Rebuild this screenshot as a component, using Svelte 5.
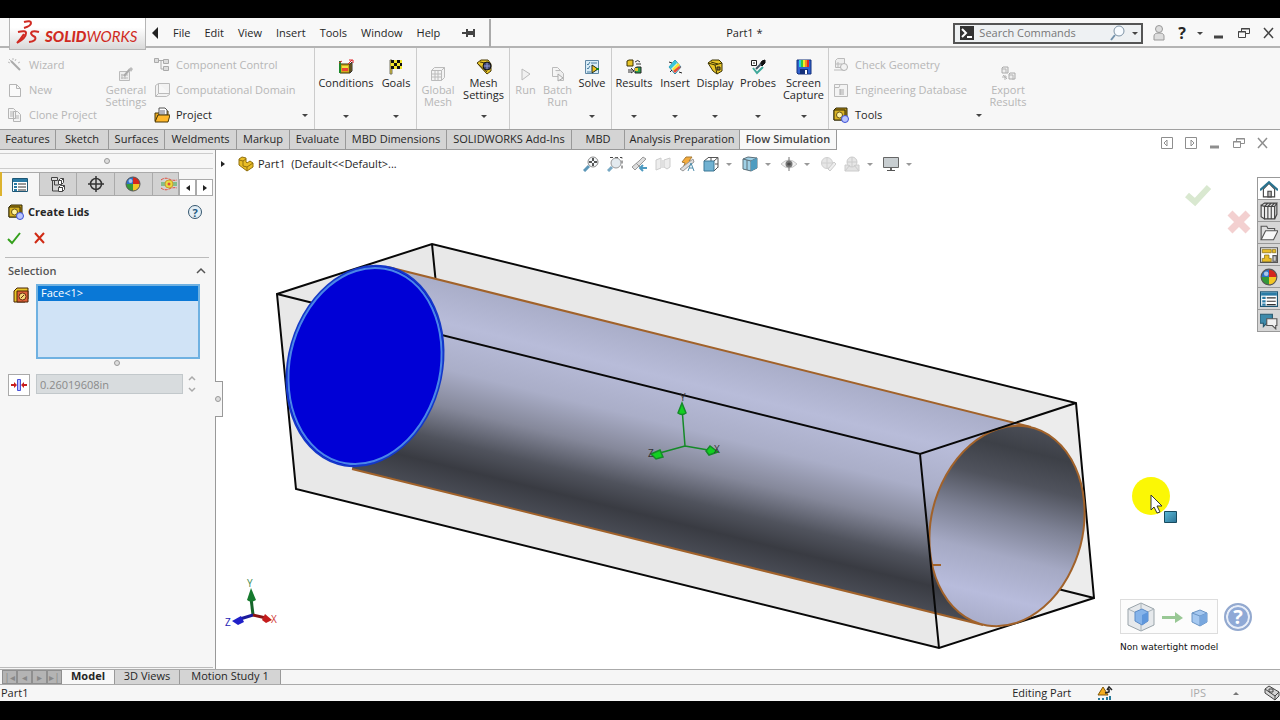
<script lang="ts">
    type Command = { label: string, icon: string, width: number, disabled?: boolean, menu?: boolean }

    const menus = ['File', 'Edit', 'View', 'Insert', 'Tools', 'Window', 'Help']

    const setup = [
        {label: 'Wizard', icon: 'wizard'},
        {label: 'New', icon: 'page'},
        {label: 'Clone Project', icon: 'clone'},
    ]

    const general: Command[] = [{label: 'General Settings', icon: 'general', width: 54, disabled: true}]

    const groups: Command[][] = [
        [
            {label: 'Conditions', icon: 'conditions', width: 62, menu: true},
            {label: 'Goals', icon: 'goals', width: 38, menu: true},
        ],
        [
            {label: 'Global Mesh', icon: 'globalMesh', width: 42, disabled: true},
            {label: 'Mesh Settings', icon: 'mesh', width: 49, menu: true},
        ],
        [
            {label: 'Run', icon: 'run', width: 31, disabled: true},
            {label: 'Batch Run', icon: 'batch', width: 33, disabled: true},
            {label: 'Solve', icon: 'solve', width: 36, menu: true},
        ],
        [
            {label: 'Results', icon: 'results', width: 44, menu: true},
            {label: 'Insert', icon: 'insert', width: 38, menu: true},
            {label: 'Display', icon: 'display', width: 42, menu: true},
            {label: 'Probes', icon: 'probes', width: 44, menu: true},
            {label: 'Screen Capture', icon: 'capture', width: 47, menu: true},
        ],
    ]

    const tabs = [
        {label: 'Features', width: 56},
        {label: 'Sketch', width: 53},
        {label: 'Surfaces', width: 56},
        {label: 'Weldments', width: 72},
        {label: 'Markup', width: 53},
        {label: 'Evaluate', width: 56},
        {label: 'MBD Dimensions', width: 101},
        {label: 'SOLIDWORKS Add-Ins', width: 125},
        {label: 'MBD', width: 53},
        {label: 'Analysis Preparation', width: 115},
        {label: 'Flow Simulation', width: 97},
    ]

    const panelTabs = ['properties', 'config', 'target', 'ball', 'flow']

    const hud = [
        {icon: 'zoomFit', label: 'Zoom to Fit'},
        {icon: 'zoomArea', label: 'Zoom to Area'},
        {icon: 'previous', label: 'Previous View'},
        {icon: 'section', label: 'Section View'},
        {icon: 'annotation', label: 'Annotation Views'},
        {icon: 'orient', label: 'View Orientation', menu: true},
        {icon: 'style', label: 'Display Style', menu: true},
        {icon: 'eye', label: 'Hide/Show Items', menu: true},
        {icon: 'appearance', label: 'Edit Appearance'},
        {icon: 'sceneBall', label: 'Apply Scene', menu: true},
        {icon: 'monitor', label: 'View Settings', menu: true},
    ]

    const taskPane = ['home', 'library', 'folder', 'palette', 'ball', 'properties', 'forum']
    const sheets = [{label: 'Model', width: 53}, {label: '3D Views', width: 65}, {label: 'Motion Study 1', width: 101}]

    let activeTab = $state('Flow Simulation')
    let activeSheet = $state('Model')
    let activePanel = $state('properties')
    let search = $state('')
    let thickness = $state('0.26019608in')

    // 16x16 artwork
    const icons: Record<string, string> = {
        wizard: '<path d="M4 4l9 9" stroke="#aaa" stroke-width="2"/><path d="M1 5l2 1M6 1v2M2 2l2 2M9 2l-1 2M11 6l2-1" stroke="#bbb"/>',
        page: '<path d="M2.500 2.500h7l4 4v8h-11zM9.500 2.500v4h4" fill="#fafafa" stroke="#b5b5b5"/>',
        clone: '<path d="M1.500 1.500h5l2 2v8h-7zM6.500 4.500h4l3 3v7h-7z" fill="#f4f4f4" stroke="#b5b5b5"/><path d="M3 5h4M3 7h3M3 9h3M8 9h4M8 11h4" stroke="#b5b5b5"/>',
        general: '<path d="M1.500 5.500h10v9h-10z" fill="#eee" stroke="#bbb"/><path d="M4 8v5M7 8v5M3 9h7M3 12h7" stroke="#bbb"/><path d="M6 10l6-7" stroke="#aaa" stroke-width="2"/><path d="M11 3l2-2 2 2-2 3z" fill="#bbb"/>',
        component: '<path d="M.5 1.500h4v4h-4zM9.500 2.500h5v4h-5zM9.500 9.500h5v4h-5z" fill="#ddd" stroke="#aaa"/><path d="M5 3.500h5M7 4v8h2" fill="none" stroke="#aaa"/>',
        domain: '<path d="M1.500 3.500l3-2h11v11l-3 2h-11zM4.500 1.500v10h11M4.500 11.500l-3 3" fill="#f2f2f2" stroke="#bbb"/>',
        project: '<path d="M1 6h4l1-2h8v4H4l-2 6H1z" fill="#e9a820" stroke="#4a3908"/><path d="M5 1h6l2 2v5H5z" fill="#fff" stroke="#555"/><path d="M6 4h5M6 6h5" stroke="#667"/><path d="M4 8h12l-2 7H1z" fill="#ffb82c" stroke="#4a3908"/>',
        conditions: '<path d="M2 5h10v9H2z" fill="#cfa91c" stroke="#3a3205"/><path d="M12 5l2-2v9l-2 2z" fill="#8a6d10" stroke="#333"/><path d="M4 7h6v5H4z" fill="#f0e33c"/><path d="M4 9h6v3H4z" fill="#e43"/><path d="M2 2v12" stroke="#1b8a2a" stroke-width="2"/><path d="M1 4l3-2M10 5l4-4M11 1h4v3" stroke="#e2262b" fill="none"/>',
        goals: '<path d="M2 1h2v14H2z" fill="#e8c81c" stroke="#776"/><path d="M3 1h11v9H3z" fill="#f1e62c"/><path d="M3 1h3v3H3zM9 1h3v3H9zM6 4h3v3H6zM12 4h2v3h-2zM3 7h3v3H3zM9 7h3v3H9z" fill="#111"/>',
        globalMesh: '<path d="M1.500 4.500l3-3h10v10l-3 3h-10zM1.500 4.500h10v10M11.500 4.500l3-3M5 4v10M8 4v10M2 8h10M2 11h10" fill="#f3f3f3" stroke="#bbb"/>',
        mesh: '<path d="M1 4l4-3h7l3 4v7l-4 3z" fill="#e8c528" stroke="#4a3a05"/><path d="M2 5l9 8M4 3l5 1" stroke="#4a3a05"/><circle cx="11" cy="7" r="4" fill="#44486c" stroke="#111"/><path d="M8 7h6M11 4v6" stroke="#8e98df"/>',
        run: '<path d="M4 3l8 5-8 6z" fill="#f1f1f1" stroke="#bbb"/>',
        batch: '<path d="M2.500 1.500h5l3 3v6h-8z" fill="#f5f5f5" stroke="#bbb"/><path d="M5.500 4.500h5l3 3v7h-4" fill="#eee" stroke="#bbb"/><path d="M8 8l5 4-5 3z" fill="#f5f5f5" stroke="#aaa"/>',
        solve: '<path d="M1.500 1.500h13v13h-13z" fill="#d9ecf7" stroke="#5f87a4"/><path d="M3 5l1 1 2-3M3 9l1 1 2-3M3 13h4M7 4h6" stroke="#4a7f9f" fill="none"/><path d="M8 6l6 4-6 4z" fill="#f0c020" stroke="#1a2b1c"/><path d="M12 10h3" stroke="#14801f" stroke-width="2"/>',
        results: '<path d="M1 2l2-1h4v6H1z" fill="#e8c528" stroke="#3a3205"/><path d="M9 9l2-1h4v6H9z" fill="#2ca24e" stroke="#222"/><path d="M9 9h3v3H9z" fill="#e8c528"/><path d="M9 3q3-3 5 0M10 5h5M2 11h5M2 13h4M5 9l3 3-3 2" stroke="#333" fill="none"/>',
        insert: '<path d="M8 1l6 7-6 7-6-7z" fill="#efe" stroke="#28a"/><path d="M2 8l6-7 2 3-6 6z" fill="#36c6d8"/><path d="M5 10l6-6 2 2-6 6z" fill="#f5e339"/><path d="M8 14l6-6-2-1-6 5z" fill="#e84a3c"/><path d="M2 3l3 1M12 13l3 1M3 13l2-2" stroke="#222"/>',
        display: '<path d="M1 4l4-3h7l3 3v8l-5 3-4-3z" fill="#e8c528" stroke="#3a3205"/><path d="M1 4l7 2 7-2M8 6l2 9M4 3l7 2" stroke="#3a3205" fill="none"/><path d="M10 8h3v3h-3z" fill="#9a7b12" stroke="#222"/>',
        probes: '<path d="M1.500 1.500h5v5h-5z" fill="#fff" stroke="#222"/><path d="M3 4h2" stroke="#222"/><path d="M12 2l3-1v3l-3 3-2-2z" fill="#111" stroke="#111"/><path d="M11 5l-5 5" stroke="#456" stroke-width="2"/><path d="M3 9l4 5 6-6" stroke="#3fa89a" stroke-width="2" fill="none"/>',
        capture: '<path d="M1 1h14v14H2l-1-1z" fill="#2f60cf" stroke="#14307a"/><path d="M3 1h2v7H3z" fill="#2bd0e0"/><path d="M5 1h2v7H5z" fill="#36c83c"/><path d="M7 1h2v7H7z" fill="#f1ea2c"/><path d="M9 1h2v7H9z" fill="#f09021"/><path d="M11 1h2v7h-2z" fill="#e2262b"/><path d="M4 10h8v5H4z" fill="#14307a"/><path d="M9 11h2v4H9z" fill="#fff"/>',
        check: '<path d="M2.500 3.500l2-2h7v9h-9z" fill="#eee" stroke="#bbb"/><circle cx="11" cy="10" r="3.500" fill="#f2f2f2" stroke="#b2b2b2"/><path d="M1 13h9M5 5v5M3 7h6" stroke="#bbb"/>',
        database: '<path d="M1.500 2.500h13v12h-13zM2 5.500h4l1-3" fill="#f3f3f3" stroke="#bbb"/><path d="M7 8h4M7 10h4M7 12h4M7 7v6" stroke="#aaa"/>',
        lids: '<path d="M1 3l2-2h11v10l-2 2H1z" fill="#b58d12" stroke="#332a05"/><path d="M1 3h11v10H1z" fill="#d9b222" stroke="#332a05"/><circle cx="6.500" cy="8" r="3" fill="#fff3a0" stroke="#6b5410"/><circle cx="12" cy="12" r="3.500" fill="#b9c4ff" stroke="#3c50d4"/>',
        exporting: '<path d="M2 2l1-1h5v6H2zM9 8l1-1h5v6H9z" fill="#eee" stroke="#aaa"/><path d="M2 3h4v4M9 9h4v5M3 9l4 4M2 11h5M5 9v5" stroke="#b5b5b5" fill="none"/>',
        properties: '<path d="M.5 1.500h15v13H.5z" fill="#fff" stroke="#1c5674"/><path d="M1 2h14v3H1z" fill="#2a7ba5"/><path d="M2 6h3v2H2zM2 9h3v2H2zM2 12h3v2H2z" fill="#2a7ba5"/><path d="M6 7h8M6 10h8M6 13h8" stroke="#333"/>',
        config: '<path d="M1.500 1.500h6v3h-6z" fill="#ddd" stroke="#444"/><path d="M2.500 5v10h6M4.500 5v4h4" fill="none" stroke="#444"/><path d="M8.500 4.500l2-2h3v4l-2 2h-3zM8.500 11.500l2-2h4v4l-2 2h-4z" fill="#fff" stroke="#444"/><path d="M8.500 4.500h3v4M11.500 4.500l2-2M8.500 11.500h4v4M12.500 11.500l2-2" stroke="#444"/>',
        target: '<circle cx="8" cy="8" r="5.500" fill="none" stroke="#333" stroke-width="1.500"/><path d="M8 0v16M0 8h16" stroke="#333" stroke-width="1.500"/>',
        ball: '<path d="M8 8V1a7 7 0 0 0-7 7z" fill="#2d72c8"/><path d="M8 8h7a7 7 0 0 0-7-7z" fill="#d5271d"/><path d="M8 8v7a7 7 0 0 0 7-7z" fill="#f3c624"/><path d="M8 8H1a7 7 0 0 0 7 7z" fill="#35993a"/><circle cx="8" cy="8" r="7" fill="none" stroke="#555"/><circle cx="5.500" cy="5" r="2" fill="#fff" opacity=".6"/>',
        flow: '<path d="M0 4q4-3 8-1t8 1M0 12q4 3 8 1t8-1" stroke="#e24b3a" fill="none" stroke-dasharray="3 1"/><path d="M0 7h5M11 7h5M0 9h5M11 9h5" stroke="#39a844"/><circle cx="8" cy="8" r="4" fill="#e7dd3c" stroke="#c93"/><circle cx="8" cy="8" r="1.500" fill="#e24b3a"/>',
        face: '<path d="M1 4l3-3h11v11l-3 3H1z" fill="#e8c528" stroke="#4a2505"/><path d="M4 4h11v11H4z" fill="#e0603a" stroke="#4a2505"/><circle cx="9.500" cy="9.500" r="3.500" fill="#f4d77a" stroke="#6b2a10"/><path d="M8 11l3-3" stroke="#6b2a10"/>',
        thickness: '<path d="M6.500 2.500h3v11h-3z" fill="#b9bfff" stroke="#4850d8"/><path d="M0 8h3M13 8h3" stroke="#c81e1e" stroke-width="2"/><path d="M3 5l3 3-3 3zM13 5l-3 3 3 3z" fill="#c81e1e"/>',
        part: '<path d="M1 6V3l3-2 4 1v4l1 1 3-2 3 2v4l-6 4-8-6z" fill="#e9bd26" stroke="#91700f"/><path d="M1 4l4 1v5l4 1 6-4M5 5l3-2M9 11v4" fill="none" stroke="#91700f"/>',
        zoomFit: '<circle cx="10" cy="6" r="5" fill="#f5f8fa" stroke="#8a8a8a"/><path d="M10 2v3M10 7v3M6 6h3M11 6h3" stroke="#222" stroke-width="1.500"/><path d="M6 10l-5 5" stroke="#5c97b8" stroke-width="3"/>',
        zoomArea: '<path d="M3 1.500h12v12" fill="none" stroke="#444" stroke-dasharray="3 2"/><circle cx="9" cy="7" r="5" fill="#e3eaef" stroke="#999"/><path d="M5 11l-4 4" stroke="#79a9c4" stroke-width="3"/>',
        previous: '<path d="M1 11l7-6 4-4 3 2-5 5-6 6z" fill="#ddd" stroke="#999"/><path d="M5 7l4 4" stroke="#999"/><path d="M9 12h7M12 9l-3 3 3 3" stroke="#4d9ac0" stroke-width="2" fill="none"/>',
        section: '<path d="M1 4l5-2v10l-5 2zM9 4l6-2v9l-3 2-3-2z" fill="#ededed" stroke="#ccc"/><path d="M6 4h3v8H6z" fill="#e0e0e0"/>',
        annotation: '<path d="M3 6l4-5h6l-3 4h3l-9 7 2-5z" fill="#f4ab3c" stroke="#a57a36"/><path d="M1 13l9-7 4-3 1 3-5 4-6 5z" fill="#ddd" stroke="#999"/><path d="M9 15l3-8 3 8M10 12h4" stroke="#4d8cab" fill="none"/>',
        orient: '<path d="M5 1.500h10v10M5.500 1.500L1 5M15 1.500L11 5M15 11l-4 4M8 1v5M12 8h3" fill="none" stroke="#555"/><path d="M1 5h10v10H1z" fill="#71b2d2" stroke="#3c7896"/>',
        style: '<path d="M1 3l5-2 9 1v10l-6 3-8-2z" fill="#9fd0e6" stroke="#5a6e78"/><path d="M1 3l8 2v10M9 5l6-3M5 4v10" fill="none" stroke="#5a6e78"/><path d="M9 5l6-3v10l-6 3z" fill="#4f9cc0"/>',
        eye: '<path d="M0 8q8-8 16 0-8 8-16 0z" fill="#f1f1f1" stroke="#c5c5c5"/><circle cx="8" cy="8" r="3.500" fill="#777"/><circle cx="8" cy="8" r="1.500" fill="#222"/><path d="M8 1v14" stroke="#777"/>',
        appearance: '<circle cx="7" cy="7" r="5.500" fill="#e6e6e6" stroke="#d0d0d0"/><path d="M7 1v12M2 7h11" stroke="#d0d0d0"/><path d="M8 13l6-7 2 2-6 7z" fill="#eee" stroke="#ccc"/>',
        sceneBall: '<path d="M1 9h14v6H1z" fill="#e2e2e2" stroke="#ccc"/><circle cx="8" cy="6" r="5" fill="#e6e6e6" stroke="#ccc"/><path d="M8 1v10M3 6h10M1 15l5-6M15 15l-5-6" stroke="#ccc"/>',
        monitor: '<path d="M.5 1.500h15v10H.5z" fill="#c8ced1" stroke="#666"/><path d="M7 12h2v2H7z" fill="#666"/><path d="M4 14.500h8" stroke="#555"/>',
        home: '<path d="M3 8v7h10V8L8 3z" fill="#fff" stroke="#444"/><path d="M0 9l8-7 8 7" fill="none" stroke="#2a7490" stroke-width="2"/><path d="M7 10h3v5H7z" fill="#bbb" stroke="#444"/>',
        library: '<path d="M1 3l3 1v11l-3-2zM4 4h3v11H4zM7 4h3v11H7zM10 4h3v11h-3z" fill="#eee" stroke="#444"/><path d="M1 3l3-2h11l-2 3M15 1v10l-2 4M10 4l3-3M7 4l3-3M4 4l3-3" fill="none" stroke="#444"/>',
        folder: '<path d="M1 14V2h5l1 2h6v3" fill="#ddd" stroke="#555"/><path d="M1 14L5 6h11l-4 8z" fill="#f8f8f8" stroke="#555"/>',
        palette: '<path d="M.5 1.500h15v13H.5z" fill="#fff" stroke="#555"/><path d="M2 3h8v3H2zM2 11h2V8h4v3h2v3H2zM11 3h3v3h-3z" fill="#e9bd26" stroke="#7b620e" stroke-width=".6"/><path d="M11.500 8.500h3v5h-3z" fill="#ccc" stroke="#555"/>',
        forum: '<path d="M0 2h11v8H6l-3 3v-3H0z" fill="#3d8aab" stroke="#285a70"/><path d="M6 6h9v6h-1v3l-3-3H6z" fill="#f0f0f0" stroke="#555"/>',
        warning: '<path d="M1 10l5-8 5 8z" fill="#f5ad1e" stroke="#80570a"/><path d="M8 8l4-1V4M10 5l2-3 3 3" stroke="#222" stroke-width="1.500" fill="none"/><path d="M1 13h2v2H1zM5 13h2v2H5zM9 12h2v3H9zM12 11h2v4h-2z" fill="#25799a"/>',
        tag: '<path d="M1 4l4-3 10 6v4l-4 4L1 8z" fill="#d5d5d5" stroke="#444"/><path d="M1 4l10 7v4M11 11l4-4M5 4h4v3H5z" fill="none" stroke="#444"/>',
    }
</script>

{#snippet icon(name: string)}
    <svg class="icon" viewBox="0 0 16 16" fill="none" aria-hidden="true">{@html icons[name]}</svg>
{/snippet}

{#snippet bigButton(cmd: Command)}
    <button class="big" disabled={cmd.disabled} style:width="{cmd.width}px">
        {@render icon(cmd.icon)}
        <span>{cmd.label}</span>
        {#if cmd.menu}<i class="caret"></i>{/if}
    </button>
{/snippet}

{#snippet windowButtons()}
    <button class="win" aria-label="Minimize"><svg viewBox="0 0 14 14"><path d="M2 11h9" stroke-width="3"/></svg></button>
    <button class="win" aria-label="Restore"><svg viewBox="0 0 14 14"><path d="M4.500 5V2.500h8v5H9M1.500 5.500h7v6h-7zM4 3h9M1 6h8" /></svg></button>
    <button class="win" aria-label="Close"><svg viewBox="0 0 14 14"><path d="M2 2l9 10M11 2l-9 10" stroke-width="1.500"/></svg></button>
{/snippet}

<div class="window">
    <header>
        <div class="logo">
            <svg viewBox="0 0 26 28" aria-hidden="true">
                <path d="M9 2q7-2 7 1 0 3-7 5M3 12q8-2 8 1 0 5-9 10Q5 20 9 14M24 12q-7-2-8 1 0 2 4 4 2 4-6 5" />
            </svg>
            <span><b>SOLID</b>WORKS</span>
        </div>
        <button class="collapse" aria-label="Collapse menu"><i class="left"></i></button>
        <nav>
            {#each menus as menu}
                <button>{menu}</button>
            {/each}
        </nav>
        <svg class="pin" viewBox="0 0 14 10" aria-hidden="true"><path d="M0 5h5M5 1v8M12 1v8M6 4h6M6 6h6" stroke="#444" stroke-width="2"/></svg>
        <h1>Part1 *</h1>
        <div class="search">
            <svg viewBox="0 0 14 14" aria-hidden="true"><path d="M0 0h14v14H0z" fill="#333"/><path d="M2 3l4 4-4 4M7 11h5" stroke="#fff" stroke-width="2" fill="none"/></svg>
            <input aria-label="Search Commands" placeholder="Search Commands" bind:value={search}>
            <svg class="lens" viewBox="0 0 16 16" aria-hidden="true"><circle cx="9" cy="6" r="5" fill="#f7fbff" stroke="#7e93a5"/><path d="M5 10l-4 5" stroke="#7392ac" stroke-width="2"/></svg>
            <i class="caret"></i>
        </div>
        <svg class="user" viewBox="0 0 14 18" aria-hidden="true"><circle cx="7" cy="5" r="3.500"/><path d="M2 16V12q0-3 5-3t5 3v4z"/></svg>
        <button class="help-menu" aria-label="Help">?<i class="caret"></i></button>
        <div class="controls">{@render windowButtons()}</div>
    </header>

    <section class="ribbon">
        <div class="rows setup">
            {#each setup as item}
                <button disabled>{@render icon(item.icon)}{item.label}</button>
            {/each}
        </div>
        {#each general as cmd}{@render bigButton(cmd)}{/each}
        <div class="rows project">
            <button disabled>{@render icon('component')}Component Control</button>
            <button disabled>{@render icon('domain')}Computational Domain</button>
            <button>{@render icon('project')}Project<i class="caret"></i></button>
        </div>
        {#each groups as group}
            <div class="group">
                {#each group as cmd}{@render bigButton(cmd)}{/each}
            </div>
        {/each}
        <div class="rows tools">
            <button disabled>{@render icon('check')}Check Geometry</button>
            <button disabled>{@render icon('database')}Engineering Database</button>
            <button>{@render icon('lids')}Tools<i class="caret"></i></button>
        </div>
        {@render bigButton({label: 'Export Results', icon: 'exporting', width: 48, disabled: true})}
    </section>

    <div class="tabs">
        {#each tabs as tab}
            <button class:active={activeTab === tab.label} style:width="{tab.width}px"
                    onclick={() => activeTab = tab.label}>{tab.label}</button>
        {/each}
        <div class="doc-controls">
            <button class="win" aria-label="Previous pane"><svg viewBox="0 0 14 14"><path d="M1.500 1.500h11v11h-11zM4 7l3-3v6z"/></svg></button>
            <button class="win" aria-label="Next pane"><svg viewBox="0 0 14 14"><path d="M1.500 1.500h11v11h-11zM10 7L7 4v6z"/></svg></button>
            {@render windowButtons()}
        </div>
    </div>

    <main>
        <aside>
            <div class="splitter"><i class="grip"></i></div>
            <div class="panel-tabs">
                {#each panelTabs as tab}
                    <button class:active={activePanel === tab} aria-label={tab} onclick={() => activePanel = tab}>{@render icon(tab)}</button>
                {/each}
                <button class="scroll" aria-label="Scroll left"><i class="left"></i></button>
                <button class="scroll" aria-label="Scroll right"><i class="right"></i></button>
            </div>
            <div class="panel-title">
                {@render icon('lids')}
                <h2>Create Lids</h2>
                <button class="round-help" aria-label="Help">?</button>
            </div>
            <div class="confirm">
                <button aria-label="OK"><svg viewBox="0 0 14 14"><path d="M1 8l4 4 8-10" stroke="#34a01c" stroke-width="2"/></svg></button>
                <button aria-label="Cancel"><svg viewBox="0 0 14 14"><path d="M2 2l9 10M11 2L2 12" stroke="#d02a14" stroke-width="2"/></svg></button>
            </div>
            <div class="section-title">
                <h3>Selection</h3>
                <svg viewBox="0 0 10 8" aria-hidden="true"><path d="M1 6l4-4 4 4" stroke="#555" stroke-width="1.500" fill="none"/></svg>
            </div>
            <div class="field">
                <div class="field-icon">{@render icon('face')}</div>
                <ul aria-label="Faces"><li>Face&lt;1&gt;</li></ul>
            </div>
            <i class="grip list-grip"></i>
            <div class="field">
                <button class="field-icon boxed" aria-label="Adjust thickness">{@render icon('thickness')}</button>
                <input aria-label="Thickness" disabled bind:value={thickness}>
                <svg class="spin" viewBox="0 0 8 20" aria-hidden="true"><path d="M1 6l3-3 3 3M1 14l3 3 3-3" stroke="#aaa" stroke-width="1.500" fill="none"/></svg>
            </div>
            <div class="flyout"><i class="grip"></i></div>
            <div class="panel-end"></div>
        </aside>

        <div class="viewport">
            <svg class="scene" viewBox="216 150 1064 519" preserveAspectRatio="xMidYMid slice" role="img" aria-label="Tube with a selected end face">
                <defs>
                    <linearGradient id="outer" gradientUnits="userSpaceOnUse" x1="709" y1="346" x2="660" y2="544">
                        <stop offset="0" stop-color="#a9adc8"/>
                        <stop offset=".2" stop-color="#b8bcd9"/>
                        <stop offset=".42" stop-color="#aaaec8"/>
                        <stop offset=".6" stop-color="#85889a"/>
                        <stop offset=".76" stop-color="#50535d"/>
                        <stop offset=".88" stop-color="#393b42"/>
                        <stop offset="1" stop-color="#484b54"/>
                    </linearGradient>
                    <!-- runs across the unit circle, which the matrix then skews -->
                    <linearGradient id="inner" gradientUnits="userSpaceOnUse" x1=".42" y1="-.91" x2="-.42" y2=".91">
                        <stop offset="0" stop-color="#4a4d56"/>
                        <stop offset=".12" stop-color="#3d4047"/>
                        <stop offset=".28" stop-color="#50535d"/>
                        <stop offset=".46" stop-color="#7d8194"/>
                        <stop offset=".65" stop-color="#a5a9c4"/>
                        <stop offset=".85" stop-color="#b8bcdc"/>
                        <stop offset="1" stop-color="#a9adca"/>
                    </linearGradient>
                    <linearGradient id="chip" x2="1" y2="1"><stop stop-color="#5cbcda"/><stop offset="1" stop-color="#2c7294"/></linearGradient>
                </defs>

                <!-- computational domain -->
                <path d="M277 294L432 244 1076 403 1094 598 939 648 296 489z" fill="#e8e8e8"/>
                <path d="M920 454L1076 403 1094 598 939 648z" fill="#ececec"/>
                <path class="edge" d="M277 294L432 244 1076 403 1094 598 939 648 296 489zM432 244l4 40M1094 598l-40-10"/>

                <!-- tube -->
                <path d="M388 267L1031 427 983 625 352 469z" fill="url(#outer)"/>
                <path class="seam" d="M388 267L1031 427M983 625L352 469"/>
                <circle r="1" transform="matrix(77 -25 9 97 1007 526)" fill="url(#inner)" class="seam"/>
                <path class="seam" d="M933 565h8"/>
                <path class="edge" d="M277 294L920 454 1076 403M920 454L939 648"/>
                <circle r="1" transform="matrix(78 -25 9 97 365 366)" class="lid"/>
                <circle r="1" transform="matrix(76 -24 9 95 365 366)" class="lid-rim"/>

                <!-- part origin -->
                <g class="origin">
                    <path d="M685 446L682 408M685 446L656 454M685 446L714 451"/>
                    <path d="M682 403l4 10q-4 3-8 0zM651 454l9-4 3 7-7 2zM718 452l-8-6-4 5 3 4z" fill="#12d021"/>
                    <text x="680" y="401">Y</text><text x="648" y="457">Z</text><text x="714" y="453">X</text>
                </g>

                <!-- view triad -->
                <g class="triad">
                    <path d="M253 615L251 598" stroke="#16652a"/>
                    <path d="M251 588l5 12q-5 3-9 0z" fill="#167a2e"/>
                    <path d="M253 615L240 619" stroke="#1b1b9c"/>
                    <path d="M232 621l9-5 3 6-6 3z" fill="#2020c8"/>
                    <path d="M253 615L266 618" stroke="#8e1414"/>
                    <path d="M272 620l-7-6-3 6 4 3z" fill="#c41c1c"/>
                    <text x="247" y="587" fill="#3d8a50">Y</text>
                    <text x="225" y="626" fill="#2424b4">Z</text>
                    <text x="271" y="623" fill="#cf3a3a">X</text>
                </g>

                <!-- pointer -->
                <circle cx="1151" cy="496" r="19" fill="#fbf705"/>
                <path d="M1151 495v15l3-3 3 6 3-1-3-6h5z" fill="#fff" stroke="#333"/>
                <path d="M1164.500 511.500h12v11h-12z" fill="url(#chip)" stroke="#184b5f"/>
            </svg>

            <div class="view-bar">
                <div class="tree"><i class="right"></i>{@render icon('part')}<span>Part1&nbsp; (Default&lt;&lt;Default&gt;...</span></div>
                <div class="hud">
                    {#each hud as tool}
                        <button aria-label={tool.label}>{@render icon(tool.icon)}</button>
                        {#if tool.menu}<i class="caret"></i>{/if}
                    {/each}
                </div>
            </div>

            <svg class="corner-ok" viewBox="0 0 28 24" aria-hidden="true"><path d="M3 12l8 7L25 4" stroke="#d9e8d0" stroke-width="6" fill="none"/></svg>
            <svg class="corner-cancel" viewBox="0 0 24 24" aria-hidden="true"><path d="M3 3l18 18M21 3L3 21" stroke="#f3d0d0" stroke-width="7" fill="none"/></svg>

            <div class="task-pane">
                {#each taskPane as item}
                    <button aria-label={item}>{@render icon(item)}</button>
                {/each}
            </div>

            <div class="watertight">
                <button class="states" aria-label="Non watertight model">
                    <svg viewBox="0 0 96 32" aria-hidden="true">
                        <path d="M7 8l13-6 13 6v16l-13 6-13-6z" fill="#e6e9ec" stroke="#9aa4aa"/>
                        <path d="M7 8l13 6 13-6M20 14v16M20 2v8" fill="none" stroke="#aab4ba"/>
                        <path d="M14 11l7-3 6 3v9l-6 4-7-4z" fill="#86b4ea" stroke="#5c8cc8"/><path d="M21 14l6-3v9l-6 4z" fill="#5f97dc"/>
                        <path d="M41 15h13v-4l8 6-8 5v-4H41z" fill="#99c895"/>
                        <path d="M71 12l8-3 7 3v9l-7 4-8-4z" fill="#a5c8f0" stroke="#6a94c4"/><path d="M71 12l8 3 7-3M79 15v10" stroke="#6a94c4" fill="none"/><path d="M79 15l7-3v9l-7 4z" fill="#78a7de"/>
                    </svg>
                </button>
                <button class="big-help" aria-label="Help">?</button>
                <span>Non watertight model</span>
            </div>
        </div>
    </main>

    <div class="sheets">
        <div class="steps">
            <button aria-label="First">|◂</button>
            <button aria-label="Previous">◂</button>
            <button aria-label="Next">▸</button>
            <button aria-label="Last">▸|</button>
        </div>
        {#each sheets as sheet}
            <button class="sheet" class:active={activeSheet === sheet.label} style:width="{sheet.width}px"
                    onclick={() => activeSheet = sheet.label}>{sheet.label}</button>
        {/each}
    </div>

    <footer>
        <span>Part1</span>
        <span class="mode">Editing Part</span>
        {@render icon('warning')}
        <span class="units">IPS</span>
        <i class="up"></i>
        {@render icon('tag')}
    </footer>
</div>

<style>
    :global(body) {
        background: #000;
    }

    .window {
        display: flex;
        flex-direction: column;
        box-sizing: border-box;
        min-height: 100vh;
        padding: 18px 0 19px;
        overflow: hidden;
        background: #000;
        color: #262626;
        font: 11px/12px "Open Sans", "Noto Sans", sans-serif;
    }

    button, input {
        box-sizing: border-box;
        margin: 0;
        padding: 0;
        border: 0;
        background: none;
        color: inherit;
        font: inherit;
    }

    h1, h2, h3 {
        margin: 0;
        font: inherit;
    }

    .icon {
        display: block;
        flex: none;
        width: 16px;
        height: 16px;
    }

    .caret, .left, .right, .up {
        flex: none;
        width: 0;
        height: 0;
        border: 3px solid transparent;
    }

    .caret {
        border-top-color: #444;
        border-bottom: 0;
    }

    .up {
        border-bottom-color: #777;
        border-top: 0;
    }

    .left {
        border-right: 4px solid #222;
        border-left: 0;
    }

    .right {
        border-left: 4px solid #222;
        border-right: 0;
    }

    .grip {
        box-sizing: border-box;
        width: 6px;
        height: 6px;
        border: 1px solid #999;
        border-radius: 50%;
        background: #ddd;
    }

    /* title bar */
    header {
        display: flex;
        align-items: center;
        box-sizing: border-box;
        height: 30px;
        padding-top: 2px;
        border-bottom: 2px solid #b4b4b4;
        background: #f8f8f8;
    }

    .logo {
        position: relative;
        z-index: 1;
        display: flex;
        align-items: center;
        align-self: flex-start;
        box-sizing: border-box;
        flex: none;
        width: 137px;
        height: 32px;
        margin: -2px 0 0 9px;
        padding-left: 5px;
        border: 1px solid #b5b5b5;
        border-top: 0;
        background: linear-gradient(#fff 30%, #d9d9d9);
        color: #d02a22;
        font: italic 15px/20px Lato, sans-serif;
    }

    .logo svg {
        width: 26px;
        height: 28px;
        margin-right: 4px;
        fill: none;
        stroke: #d02a22;
        stroke-width: 2;
    }

    .logo span {
        padding-top: 4px;
    }

    .logo b {
        font-weight: 900;
    }

    .collapse {
        display: flex;
        margin: 0 15px 0 6px;
    }

    .collapse .left {
        border-width: 6px 6px 6px 0;
    }

    nav {
        display: flex;
        gap: 14px;
    }

    .pin {
        width: 14px;
        height: 10px;
        padding: 9px 13px 9px 22px;
        border-right: 2px solid #aaa;
    }

    h1 {
        flex: 1;
        padding-left: 44px;
        text-align: center;
    }

    .search {
        display: flex;
        align-items: center;
        box-sizing: border-box;
        width: 190px;
        height: 21px;
        padding: 0 3px 0 5px;
        border: 2px solid #555;
        background: #eef1f3;
    }

    .search svg {
        flex: none;
        width: 14px;
        height: 14px;
    }

    .search input {
        flex: 1;
        min-width: 0;
        padding-left: 5px;
        outline: 0;
    }

    .search input::placeholder {
        color: #777;
        opacity: 1;
    }

    .search .lens {
        width: 16px;
        height: 16px;
        margin-right: 6px;
    }

    .user {
        width: 14px;
        height: 18px;
        margin: 0 12px 0 9px;
        fill: #ddd;
        stroke: #999;
    }

    .help-menu {
        display: flex;
        align-items: center;
        gap: 11px;
        font-size: 16px;
        font-weight: 700;
    }

    .controls, .doc-controls {
        display: flex;
        align-items: center;
        gap: 11px;
        padding: 0 4px 0 9px;
    }

    .win {
        width: 14px;
        height: 14px;
    }

    .win svg {
        display: block;
        fill: none;
        stroke: #444;
    }

    /* command ribbon */
    .ribbon {
        display: flex;
        height: 81px;
        background: #f7f7f7;
    }

    .rows {
        display: flex;
        flex-direction: column;
        gap: 1px;
        box-sizing: border-box;
        padding: 5px 0 0 7px;
    }

    .rows button {
        display: flex;
        align-items: center;
        gap: 6px;
        height: 24px;
        white-space: nowrap;
    }

    .rows .caret {
        margin: 0 6px 0 auto;
    }

    .setup {
        width: 99px;
    }

    .project {
        width: 161px;
        padding-left: 1px;
    }

    .tools {
        width: 156px;
        padding-left: 4px;
        border-left: 1px solid #ccc;
    }

    .tools .caret {
        margin-right: 2px;
    }

    .big {
        display: flex;
        flex-direction: column;
        align-items: center;
        gap: 2px;
        padding: 11px 0;
        text-align: center;
    }

    .big:disabled {
        padding-top: 18px;
    }

    .big .caret {
        margin-top: auto;
    }

    button:disabled {
        color: #b6b6b6;
    }

    .group {
        display: flex;
        padding-right: 1px;
        border-left: 1px solid #ccc;
    }

    .tabs {
        display: flex;
        box-sizing: border-box;
        height: 21px;
        border-top: 1px solid #a0a0a0;
        background: #fff;
    }

    .tabs > button {
        padding-bottom: 2px;
        border-right: 1px solid #999;
        border-bottom: 1px solid #999;
        background: #d4d4d4;
        white-space: nowrap;
    }

    .tabs > .active {
        background: #f8f8f8;
        color: #444;
        font-weight: 600;
    }

    .doc-controls {
        gap: 10px;
        margin-left: auto;
        padding: 6px 10px 0 0;
        opacity: .6;
    }

    /* property manager */
    main {
        display: flex;
        flex: 1;
        background: #fff;
    }

    aside {
        position: relative;
        display: flex;
        flex: none;
        flex-direction: column;
        box-sizing: border-box;
        width: 216px;
        border-right: 1px solid #999;
        background: #f6f6f6;
    }

    .splitter {
        display: flex;
        align-items: center;
        justify-content: center;
        height: 14px;
        margin: 3px 2px 0 0;
        border: 1px solid #ccc;
        border-width: 1px 0;
    }

    .panel-tabs {
        display: flex;
        height: 24px;
        margin: 3px 2px 0 0;
        border-left: 2px solid #ddb32e;
    }

    .panel-tabs button {
        display: flex;
        align-items: center;
        justify-content: center;
        box-sizing: border-box;
        width: 38px;
        border: 1px solid #aaa;
        border-width: 1px 1px 1px 0;
        background: #d2d2d2;
    }

    .panel-tabs button:nth-child(5) {
        width: 27px;
        padding-left: 8px;
        overflow: hidden;
    }

    .panel-tabs .active {
        border-bottom: 0;
        background: #f6f6f6;
    }

    .panel-tabs .scroll {
        width: 17px;
        margin-top: 7px;
        border-left-width: 1px;
        background: #fff;
    }

    .panel-title {
        display: flex;
        align-items: center;
        gap: 4px;
        height: 16px;
        margin: 8px 13px 0 8px;
    }

    h2 {
        font-weight: 700;
    }

    .round-help {
        width: 14px;
        height: 14px;
        margin-left: auto;
        border: 1px solid #35566e;
        border-radius: 50%;
        background: #e3eef5;
        color: #235a80;
        font-weight: 700;
        line-height: 11px;
    }

    .confirm {
        display: flex;
        gap: 12px;
        margin: 11px 6px 0 5px;
        padding: 0 2px 12px;
        border-bottom: 1px solid #bbb;
    }

    .confirm button {
        width: 14px;
        height: 14px;
    }

    .confirm svg {
        display: block;
        fill: none;
    }

    .section-title {
        display: flex;
        align-items: center;
        justify-content: space-between;
        height: 26px;
        padding: 0 9px 0 8px;
    }

    .section-title svg {
        width: 10px;
        height: 8px;
    }

    h3 {
        color: #555;
        font-weight: 600;
    }

    .field {
        display: flex;
        align-items: flex-start;
        padding: 0 15px 0 8px;
    }

    .field-icon {
        display: flex;
        flex: none;
        align-items: center;
        justify-content: center;
        box-sizing: border-box;
        width: 22px;
        height: 22px;
        margin-right: 6px;
        padding-left: 4px;
    }

    .boxed {
        padding: 0;
        border: 1px solid #aaa;
        background: #fff;
    }

    ul {
        box-sizing: border-box;
        flex: 1;
        height: 75px;
        margin: 0;
        padding: 0;
        border: 2px solid #6fb1e1;
        background: #d0e3f6;
        list-style: none;
    }

    li {
        padding: 1px 3px 2px;
        background: #0a78d6;
        color: #fff;
    }

    .list-grip {
        margin: 1px 0 8px 114px;
    }

    .field input {
        flex: 1;
        min-width: 0;
        height: 20px;
        padding: 0 3px;
        border: 1px solid #c2c8cb;
        background: #d8dcde;
        color: #8a8a8a;
    }

    .spin {
        width: 8px;
        height: 20px;
        margin: 0 4px 0 5px;
    }

    .flyout {
        position: absolute;
        top: 231px;
        left: 215px;
        z-index: 1;
        display: flex;
        align-items: center;
        box-sizing: border-box;
        width: 8px;
        height: 36px;
        border: 1px solid #999;
        border-left: 0;
        background: #f6f6f6;
    }

    .panel-end {
        height: 1px;
        margin: auto 2px 1px 0;
        background: #bbb;
    }

    /* graphics area */
    .viewport {
        position: relative;
        flex: 1;
        overflow: hidden;
    }

    .scene {
        position: absolute;
        width: 100%;
        height: 100%;
    }

    .edge {
        fill: none;
        stroke: #080808;
        stroke-width: 2;
    }

    .seam {
        stroke: #a1622a;
        stroke-width: 2;
        vector-effect: non-scaling-stroke;
    }

    .lid {
        fill: #0000d6;
        stroke: #1438c8;
        stroke-width: 2;
        vector-effect: non-scaling-stroke;
    }

    .lid-rim {
        fill: none;
        stroke: #4a86e8;
        stroke-width: 2;
        vector-effect: non-scaling-stroke;
    }

    .origin path {
        stroke: #158a28;
        stroke-width: 1.5;
    }

    .origin text {
        fill: #333;
    }

    .origin text, .triad text {
        font: 10px "Open Sans", sans-serif;
    }

    .triad path {
        stroke-width: 3;
    }

    .view-bar {
        position: relative;
        display: grid;
        grid-template-columns: 1fr auto 1fr;
        align-items: center;
        height: 28px;
    }

    .tree {
        display: flex;
        align-items: center;
        padding-left: 5px;
    }

    .tree .icon {
        margin: 0 4px 0 13px;
    }

    .hud {
        display: flex;
        align-items: center;
        gap: 8px;
    }

    .hud .caret {
        margin: 0 2px 0 -1px;
        border-top-color: #999;
    }

    .corner-ok, .corner-cancel {
        position: absolute;
        top: 33px;
        right: 68px;
        width: 28px;
        height: 24px;
    }

    .corner-cancel {
        top: 60px;
        right: 29px;
        width: 24px;
    }

    .task-pane {
        position: absolute;
        top: 27px;
        right: 0;
        width: 22px;
        border: 1px solid #999;
        border-width: 1px 0 0 1px;
        background: #d6d6d6;
    }

    .task-pane button {
        display: flex;
        align-items: center;
        justify-content: center;
        box-sizing: content-box;
        width: 100%;
        height: 21px;
        border-bottom: 1px solid #999;
    }

    .task-pane .icon {
        width: 18px;
        height: 18px;
    }

    .task-pane button:first-child {
        background: #fff;
    }

    .watertight {
        position: absolute;
        right: 28px;
        bottom: 16px;
        display: grid;
        grid-template-columns: 98px 28px;
        gap: 7px 6px;
        align-items: center;
        font: 9px/12px "DejaVu Sans", sans-serif;
        white-space: nowrap;
        color: #111;
    }

    .states {
        height: 35px;
        border: 1px solid #ddd;
        background: #fcfcfc;
    }

    .states svg {
        display: block;
    }

    .big-help {
        width: 28px;
        height: 28px;
        border: 2px solid #93a9cf;
        border-radius: 50%;
        background: #8fa9d6;
        box-shadow: inset 0 0 0 2px #e8eef8;
        color: #fff;
        font: 700 20px/22px "Open Sans", sans-serif;
    }

    /* bottom bars */
    .sheets {
        display: flex;
        box-sizing: border-box;
        height: 16px;
        border: 1px solid #aaa;
        border-width: 1px 0;
        background: #f6f6f6;
    }

    .steps {
        display: flex;
        box-sizing: border-box;
        width: 62px;
        padding-left: 2px;
    }

    .steps button {
        flex: 1;
        overflow: hidden;
        border: 1px solid #8f8f8f;
        background: #b4b4b4;
        color: #888;
        font-size: 10px;
        line-height: 10px;
    }

    .sheet {
        padding-bottom: 2px;
        border-right: 1px solid #999;
        background: #d4d4d4;
    }

    .sheet.active {
        background: #f8f8f8;
        font-weight: 700;
    }

    footer {
        display: flex;
        align-items: center;
        height: 16px;
        padding-left: 1px;
        background: #f6f6f6;
    }

    .mode {
        margin: 0 26px 0 auto;
    }

    .units {
        margin: 0 27px 0 77px;
        color: #aaa;
    }

    .up {
        margin-right: 25px;
    }
</style>
